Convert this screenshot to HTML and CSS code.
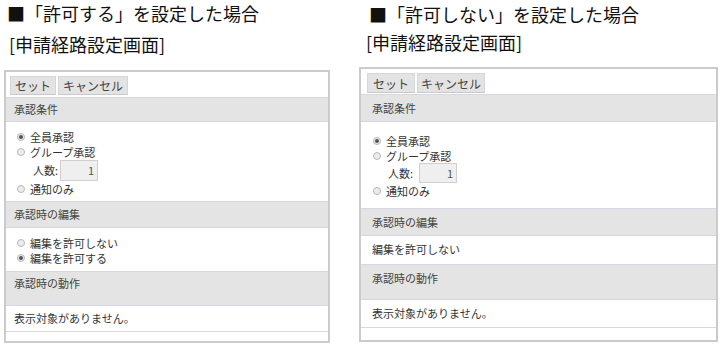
FILE: index.html
```html
<!DOCTYPE html>
<html lang="ja">
<head>
<meta charset="utf-8">
<link rel="stylesheet" href="styles.css">
</head>
<body>
<div class="page">
  <section class="col col-left">
    <div class="title">■「許可する」を設定した場合</div>
    <div class="sub">[申請経路設定画面]</div>
    <div class="panel">
      <div class="toolbar">
        <span class="btn btn-set">セット</span><span class="btn btn-cancel">キャンセル</span>
      </div>
      <div class="band band-1">承認条件</div>
      <div class="opts opts-1">
        <div class="opt"><span class="radio on"></span>全員承認</div>
        <div class="opt"><span class="radio"></span>グループ承認</div>
        <div class="num-row"><span class="num-label">人数:</span><span class="num-box">1</span></div>
        <div class="opt"><span class="radio"></span>通知のみ</div>
      </div>
      <div class="band band-2">承認時の編集</div>
      <div class="opts opts-2">
        <div class="opt"><span class="radio"></span>編集を許可しない</div>
        <div class="opt"><span class="radio on"></span>編集を許可する</div>
      </div>
      <div class="band band-3">承認時の動作</div>
      <div class="row row-msg">表示対象がありません。</div>
      <div class="foot"></div>
    </div>
  </section>
  <section class="col col-right">
    <div class="title">■「許可しない」を設定した場合</div>
    <div class="sub">[申請経路設定画面]</div>
    <div class="panel">
      <div class="toolbar">
        <span class="btn btn-set">セット</span><span class="btn btn-cancel">キャンセル</span>
      </div>
      <div class="band band-1">承認条件</div>
      <div class="opts opts-1">
        <div class="opt"><span class="radio on"></span>全員承認</div>
        <div class="opt"><span class="radio"></span>グループ承認</div>
        <div class="num-row"><span class="num-label">人数:</span><span class="num-box">1</span></div>
        <div class="opt"><span class="radio"></span>通知のみ</div>
      </div>
      <div class="band band-2">承認時の編集</div>
      <div class="row row-edit">編集を許可しない</div>
      <div class="band band-3">承認時の動作</div>
      <div class="row row-msg">表示対象がありません。</div>
      <div class="foot"></div>
    </div>
  </section>
</div>
</body>
</html>
```
FILE: styles.css
```css
* { box-sizing: border-box; }
html, body { margin: 0; padding: 0; background: #fff; }
body {
  font-family: "Noto Sans CJK JP", "Noto Sans", sans-serif;
  color: #333;
  width: 724px;
  height: 348px;
  overflow: hidden;
}
.page { display: flex; align-items: flex-start; }
.col { display: flex; flex-direction: column; }
.col-left { margin-left: 4px; width: 326px; }
.col-right { margin-left: 29px; width: 359px; }

.title { font-size: 18px; color: #111; white-space: nowrap; }
.sub { font-size: 18px; color: #111; white-space: nowrap; }
.col-left .title { line-height: 26px; padding-left: 3px; }
.col-left .sub { line-height: 30px; margin-top: 3px; padding-left: 5px; }
.col-left .panel { margin-top: 11px; height: 273px; }
.col-right .title { line-height: 28px; padding-left: 10px; }
.col-right .sub { line-height: 28px; padding-left: 7px; }
.col-right .panel { margin-top: 11px; height: 275px; }

.panel {
  border: 2px solid #cbcbcb;
  background: #fff;
  font-size: 11px;
  display: flex;
  flex-direction: column;
}
.toolbar { display: flex; gap: 2px; padding: 4px 0 2px 4px; }
.col-right .toolbar { padding: 4px 0 1px 6px; }
.btn {
  display: inline-flex; align-items: center; justify-content: center;
  height: 19px;
  background: #e3e3e3;
  border: 1px solid #d6d6d6;
  border-bottom-color: #c9c9c9;
  color: #444;
  font-size: 12px;
}
.btn-set { width: 46px; }
.btn-cancel { width: 70px; }
.col-right .btn { height: 20px; }
.col-right .btn-set { width: 48px; }
.col-right .btn-cancel { width: 68px; }

.band {
  background: #e3e4e3;
  border-top: 1px solid #d6d6e6;
  border-bottom: 1px solid #d6d6e6;
  color: #444;
  line-height: 15px;
  padding-left: 8px;
}
.col-right .band { padding-left: 11px; }
.col-left .band-1 { height: 25px; padding-top: 4px; }
.col-left .band-2 { height: 27px; padding-top: 5px; }
.col-left .band-3 { height: 35px; padding-top: 4px; }
.col-right .band-1 { height: 28px; padding-top: 6px; }
.col-right .band-2 { height: 28px; padding-top: 6px; }
.col-right .band-3 { height: 36px; padding-top: 6px; }

.opts { display: flex; flex-direction: column; padding-left: 11px; }
.col-left .opts-1 { padding-top: 7px; padding-bottom: 5px; }
.col-left .opts-2 { padding-top: 7px; padding-bottom: 6px; }
.col-right .opts-1 { padding-top: 11px; padding-bottom: 10px; padding-left: 12px; }
.opt { display: flex; align-items: center; height: 15px; color: #333; white-space: nowrap; }
.radio {
  width: 8px; height: 8px; border-radius: 50%;
  border: 1px solid #b8b8b8;
  background: #ececec;
  margin-right: 5px;
  display: inline-flex; align-items: center; justify-content: center;
  flex: none;
}
.radio.on::after {
  content: ""; width: 4px; height: 4px; border-radius: 50%; background: #555;
}
.num-row { display: flex; align-items: center; height: 22px; padding-left: 16px; white-space: nowrap; }
.col-right .num-row { height: 20px; padding-left: 15px; }
.num-label { flex: none; margin-right: 2px; }
.col-right .num-label { margin-right: 6px; }
.num-box {
  flex: none;
  width: 38px; height: 21px;
  border: 1px solid #cfcfcf;
  background: #efefef;
  text-align: right;
  padding-right: 3px;
  line-height: 19px;
  color: #555;
}
.col-right .num-box { height: 20px; line-height: 18px; }

.row { color: #333; line-height: 15px; padding-left: 8px; white-space: nowrap; }
.col-right .row { padding-left: 11px; }
.col-left .row-msg { height: 26px; padding-top: 5px; border-bottom: 1px solid #d6d6e6; }
.col-right .row-edit { height: 28px; padding-top: 6px; }
.col-right .row-msg { height: 28px; padding-top: 6px; border-bottom: 1px solid #d6d6e6; }
.foot { flex: 1; }
```
